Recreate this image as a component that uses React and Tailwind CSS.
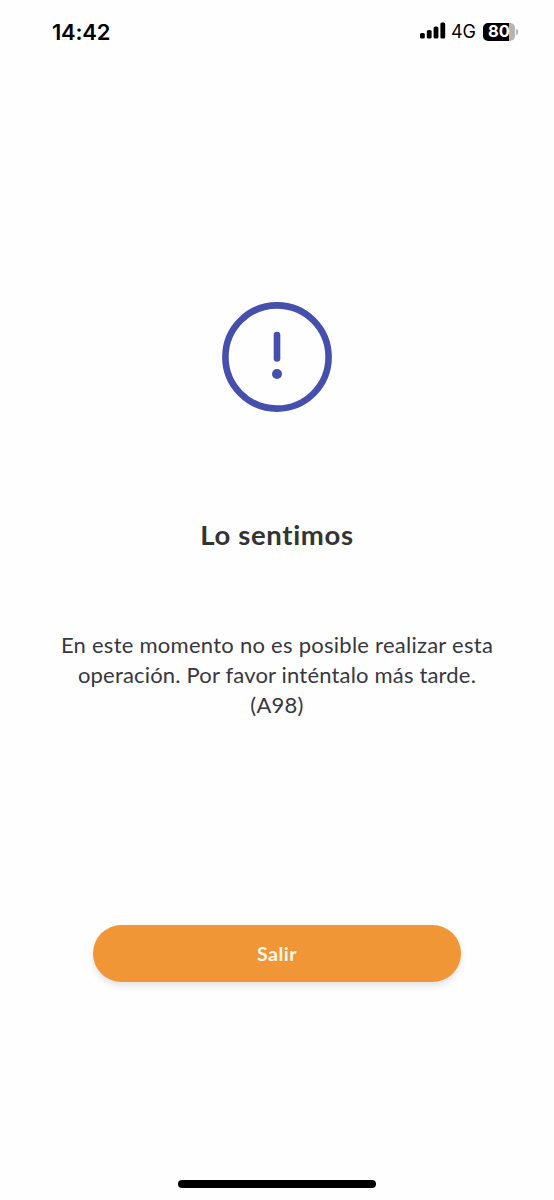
import React from 'react';

const StatusBar = () => (
  <header className="flex h-[63px] w-full items-center justify-between pl-[52px] pr-[36px]">
    <span className="font-['Inter',sans-serif] text-[22px] leading-none font-semibold tracking-[-0.2px] text-black">
      14:42
    </span>

    <div className="flex items-center">
      {/* Signal strength */}
      <svg width="26" height="17" viewBox="0 0 26 17" className="mb-0.5 text-black" fill="currentColor">
        <rect x="0" y="11" width="4.8" height="5.5" rx="1.5" />
        <rect x="6.8" y="8" width="4.8" height="8.5" rx="1.5" />
        <rect x="13.6" y="4.5" width="4.8" height="12" rx="1.5" />
        <rect x="20.4" y="0.5" width="4.8" height="16" rx="1.5" />
      </svg>

      <span className="ml-[5px] font-['Inter',sans-serif] text-[18px] leading-none text-black">
        4G
      </span>

      {/* Battery */}
      <div className="ml-[7px] flex items-center">
        <div className="flex h-[18px] w-8 items-center justify-center rounded-[5px] bg-linear-to-r from-black from-80% to-[#b4b4b4] to-80%">
          <span className="font-['Inter',sans-serif] text-[16.5px] leading-none font-bold text-white">
            80
          </span>
        </div>
        <span className="ml-px h-1.5 w-0.5 rounded-r-full bg-[#b4b4b4]" />
      </div>
    </div>
  </header>
);

const AlertIcon = () => (
  <svg width="110" height="110" viewBox="0 0 110 110" fill="none" className="text-[#444fae]">
    <circle cx="55" cy="55" r="51.6" stroke="currentColor" strokeWidth="6.6" />
    <path d="M55 33V56.5" stroke="currentColor" strokeWidth="6.6" strokeLinecap="round" />
    <circle cx="55" cy="72" r="5" fill="currentColor" />
  </svg>
);

const App = () => {
  return (
    <div className="flex h-screen w-full flex-col items-center overflow-hidden bg-[#fefefe] font-['Lato',sans-serif]">
      <StatusBar />

      <main className="flex w-full flex-1 flex-col items-center pt-[239px] text-center">
        <AlertIcon />

        <h1 className="mt-[103px] text-[27.5px] leading-10 font-bold tracking-[0.65px] text-[#333333]">
          Lo sentimos
        </h1>

        <p className="mt-[75px] text-[22px] leading-[30px] tracking-[0.26px] text-[#373741]">
          En este momento no es posible realizar esta
          <br />
          <span className="tracking-[0.18px]">operación. Por favor inténtalo más tarde.</span>
          <br />
          (A98)
        </p>

        <button
          type="button"
          className="mt-[205px] h-[57px] w-[368px] rounded-full bg-[#f09637] pt-px text-[19.5px] font-bold tracking-[0.5px] text-[#fff8ec] shadow-[0_4px_6px_rgba(40,40,80,0.12)]"
        >
          Salir
        </button>
      </main>

      {/* Home indicator */}
      <div className="mb-3 h-2 w-[198px] shrink-0 rounded-full bg-black" />
    </div>
  );
};

export default App;
